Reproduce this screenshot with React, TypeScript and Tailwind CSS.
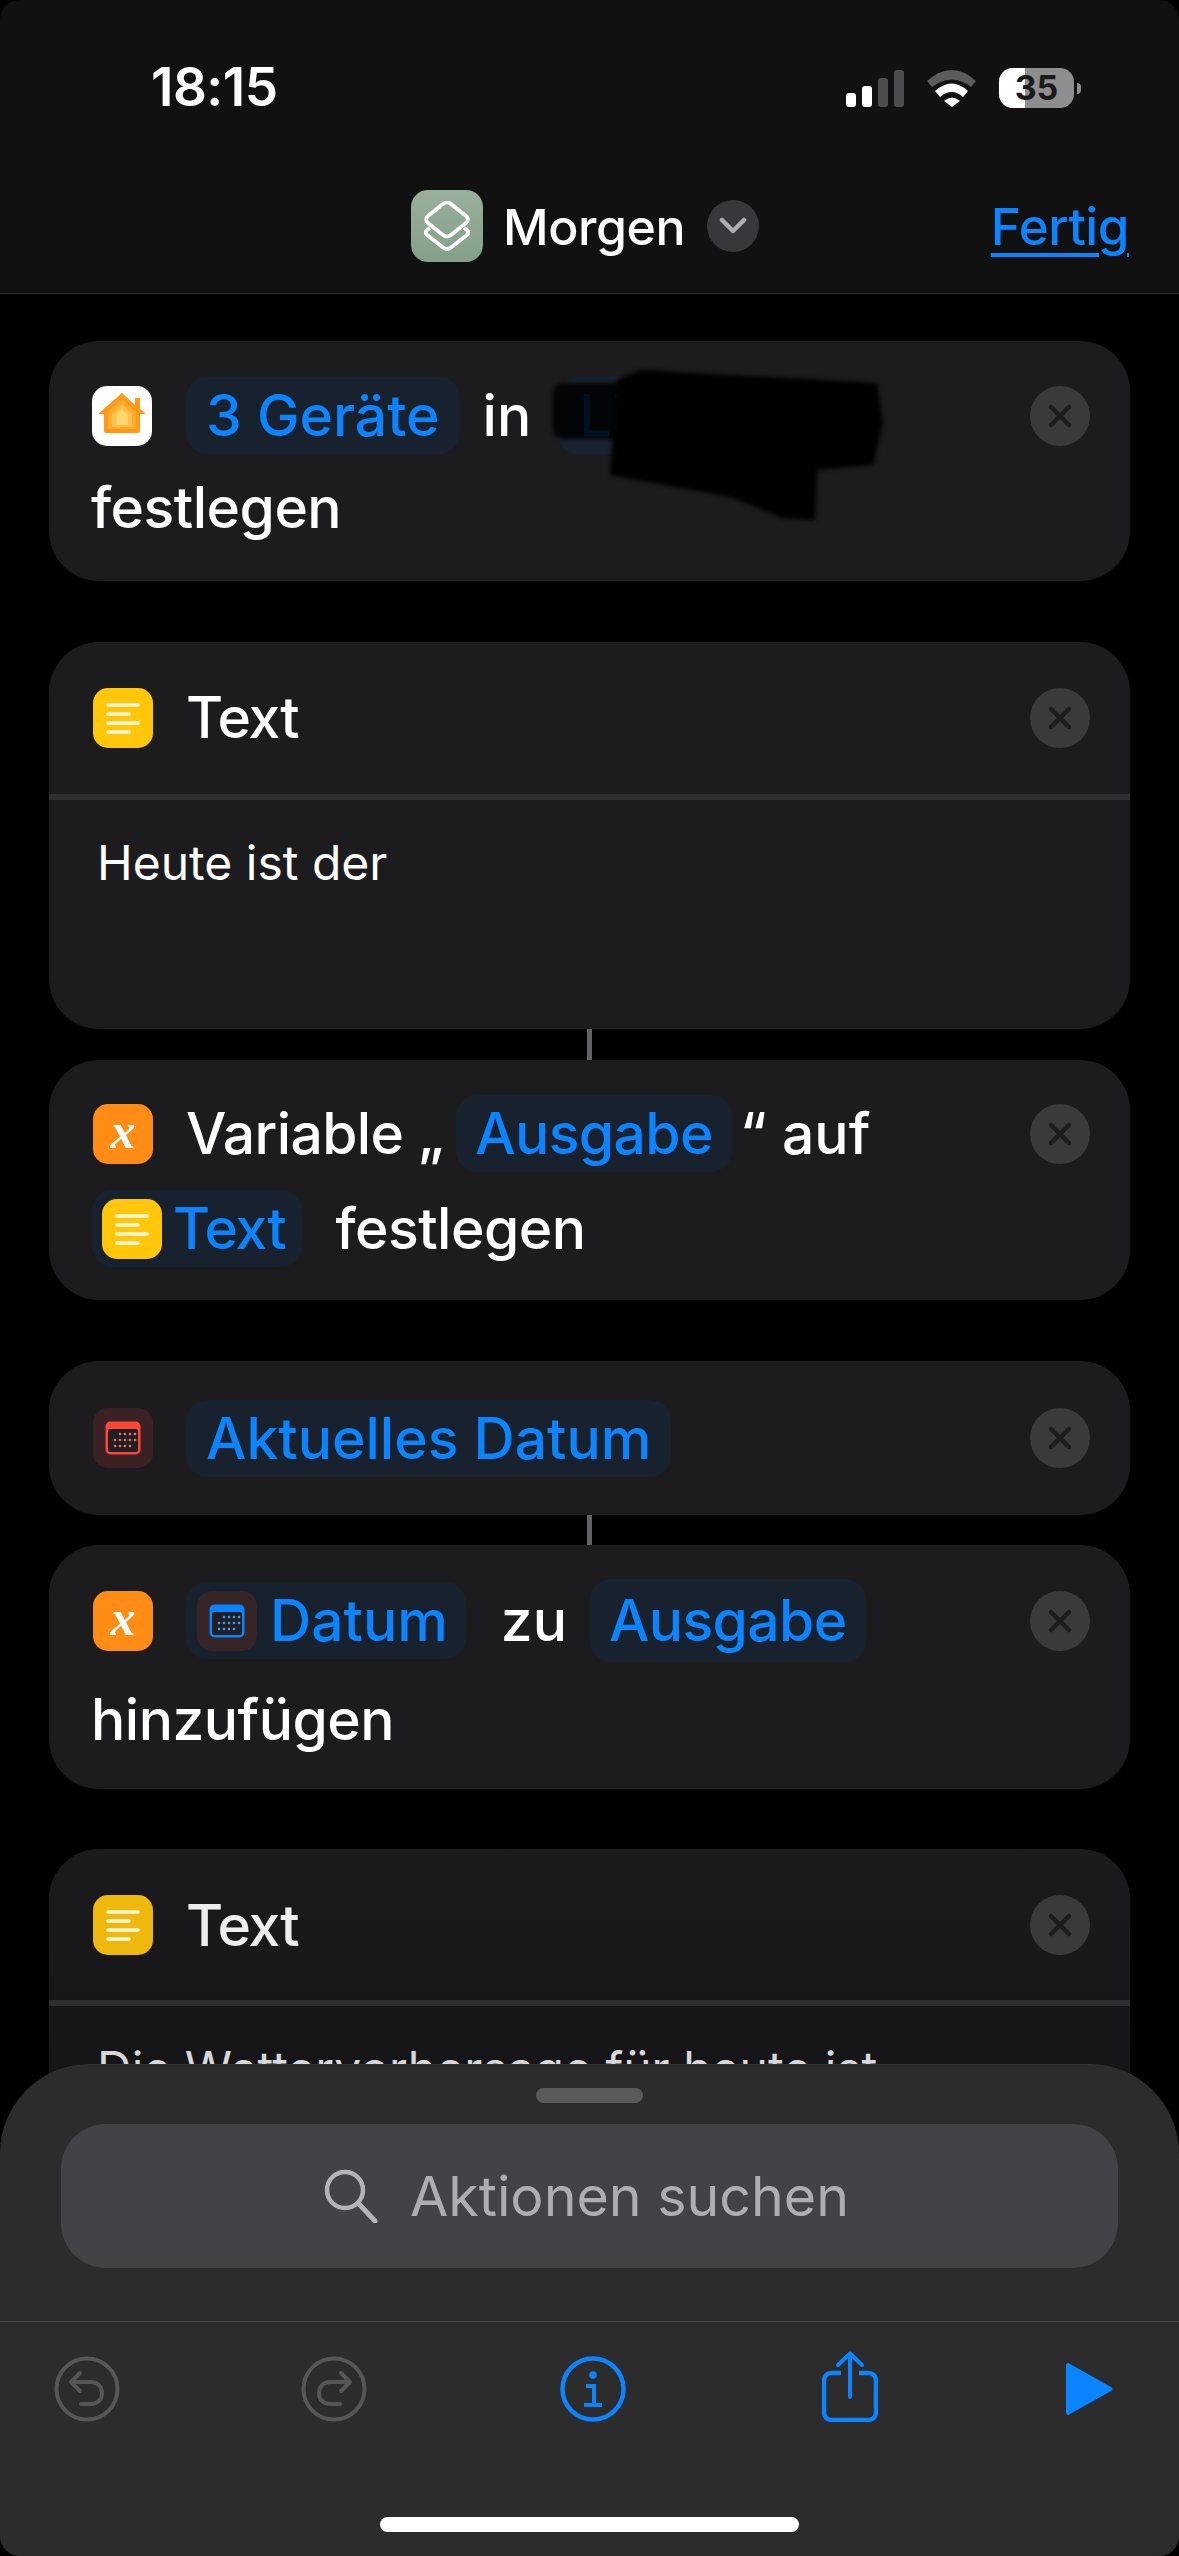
import React from 'react';

const FONT = 'font-["Inter","Liberation_Sans",sans-serif]';

const TextGlyph: React.FC = () => (
    <svg width="36" height="36" viewBox="0 0 36 36">
        <g stroke="#fff8dc" strokeWidth="3.6" strokeLinecap="round">
            <path d="M3 5h30" />
            <path d="M3 14h21" />
            <path d="M3 23h30" />
            <path d="M3 32h21" />
        </g>
    </svg>
);

const TextTile: React.FC<{ dim?: boolean }> = ({ dim }) => (
    <div className={`w-[60px] h-[60px] rounded-[15px] flex items-center justify-center shrink-0 ${dim ? 'bg-[#efb80c]' : 'bg-[#ffc60a]'}`}>
        <TextGlyph />
    </div>
);

const VarTile: React.FC = () => (
    <div className='w-[60px] h-[60px] rounded-[15px] bg-[#ff8c14] flex items-center justify-center shrink-0 pb-[6px]'>
        <span className='font-["Liberation_Serif",serif] italic font-bold text-white text-[50px] leading-none'>x</span>
    </div>
);

const CalendarTile: React.FC<{ color: string; dots: string; bg: string }> = ({ color, dots, bg }) => (
    <div className={`w-[60px] h-[60px] rounded-[15px] flex items-center justify-center shrink-0 ${bg}`}>
        <svg width="36" height="34" viewBox="0 0 36 34">
            <rect x="0.5" y="0.5" width="35" height="33" rx="5" fill={color} />
            <rect x="3" y="8" width="30" height="23" rx="2" fill="#1f1f24" />
            {[0, 1, 2, 3].map(col => (
                <circle key={`a${col}`} cx={15 + col * 5} cy="13" r="1.3" fill={dots} />
            ))}
            {[0, 1, 2, 3, 4].map(col => (
                <circle key={`b${col}`} cx={10 + col * 5} cy="19" r="1.3" fill={dots} />
            ))}
            {[0, 1, 2, 3].map(col => (
                <circle key={`c${col}`} cx={10 + col * 5} cy="25" r="1.3" fill={dots} />
            ))}
        </svg>
    </div>
);

const HomeTile: React.FC = () => (
    <div className='w-[60px] h-[60px] rounded-[15px] bg-white shrink-0 overflow-hidden'>
        <svg width="60" height="60" viewBox="0 0 60 60">
            <path d="M30 7 43 19V12H48V23L53 27V28H48V45Q48 47 46 47H14Q12 47 12 45V28H7V27Z" fill="#ff9a17" />
            <path d="M30 13 44 26V43H16V26Z" fill="#ffac2e" />
            <path d="M30 18 40 28V41H20V28Z" fill="#ffc04c" />
            <path d="M30 23 36 29V39H24V29Z" fill="#ffd570" />
        </svg>
    </div>
);

const CloseButton: React.FC = () => (
    <div className='w-[60px] h-[60px] rounded-full bg-[#3a3a3c] flex items-center justify-center shrink-0'>
        <svg width="26" height="26" viewBox="0 0 26 26">
            <path d="M4 4 22 22M22 4 4 22" stroke="#1c1c1e" strokeWidth="4.500" strokeLinecap="round" />
        </svg>
    </div>
);

const Pill: React.FC<{ children: React.ReactNode; className?: string }> = ({ children, className }) => (
    <div className={`h-[77px] rounded-[21px] bg-[#18222e] text-[#0a84ff] flex items-center ${className ?? 'px-[21px]'}`}>
        {children}
    </div>
);

const Connector: React.FC<{ height: string }> = ({ height }) => (
    <div className={`w-[5px] bg-[#636366] mx-auto ${height}`} />
);

const Card: React.FC<{ children: React.ReactNode; className?: string }> = ({ children, className }) => (
    <div className={`relative mx-[49px] rounded-[50px] bg-[#1c1c1e] ${className ?? ''}`}>{children}</div>
);

const App: React.FC = () => {
    return (
        <div className={`relative w-[1179px] h-[2556px] overflow-hidden bg-black text-white ${FONT}`}>
            {/* header */}
            <div className='h-[294px] bg-[#111112] border-b border-[#2c2c2e] rounded-t-[20px]'>
                <div className='flex items-center h-[176px] pl-[151px] pr-[98px]'>
                    <span className='text-[53px] font-semibold tracking-[-0.5px]'>18:15</span>
                    <div className='ml-auto flex items-center gap-[23px]'>
                        <svg width="58" height="37" viewBox="0 0 58 37">
                            <rect x="0" y="23" width="10" height="14" rx="3" fill="#fff" />
                            <rect x="16" y="16" width="10" height="21" rx="3" fill="#fff" />
                            <rect x="32" y="8" width="10" height="29" rx="3" fill="#4d4d4f" />
                            <rect x="48" y="0" width="10" height="37" rx="3" fill="#4d4d4f" />
                        </svg>
                        <svg width="49" height="37" viewBox="0 0 49 37">
                            <path d="M0 11Q25 -11 49 11L44 17Q25 2 5 17Z" fill="#5c5c5e" />
                            <path d="M8 21Q25 6 41 21L36 27Q25 17 13 27Z" fill="#fff" />
                            <path d="M17 31Q25 24 33 31L25 37Z" fill="#fff" />
                        </svg>
                        <div className='flex items-center gap-[3px]'>
                            <div className='relative w-[75px] h-[40px] rounded-[14px] overflow-hidden bg-[#8e8e8e] flex items-center justify-center'>
                                <div className='absolute left-0 top-0 bottom-0 w-[26px] bg-white' />
                                <span className='relative text-[#1a1a1a] text-[34px] font-bold leading-none'>35</span>
                            </div>
                            <div className='w-[4px] h-[11px] rounded-r-full bg-[#8e8e8e]' />
                        </div>
                    </div>
                </div>
                <div className='flex items-center h-[72px] mt-[14px] pl-[411px] pr-[50px]'>
                    <div className='w-[72px] h-[72px] rounded-[17px] bg-gradient-to-b from-[#98af9c] to-[#84a08a] flex items-center justify-center'>
                        <svg width="46" height="50" viewBox="0 0 46 50" fill="none">
                            <path d="M6 27 2.500 29.500C1.500 31 1.500 32 2.500 33.500L19 46.500C21.500 48.300 24.500 48.300 27 46.500L43.500 33.500C44.500 32 44.500 31 43.500 29.500L40 27" stroke="#fff" strokeWidth="3.800" strokeLinejoin="round" />
                            <path d="M19 3 4 15C1.500 17 1.500 20 4 22L19 34C21.500 36 24.500 36 27 34L42 22C44.500 20 44.500 17 42 15L27 3C24.500 1 21.500 1 19 3Z" stroke="#fff" strokeWidth="3.800" strokeLinejoin="round" />
                        </svg>
                    </div>
                    <span className='ml-[20px] mt-[2px] text-[50px] font-medium leading-none tracking-[-0.4px]'>Morgen</span>
                    <div className='ml-[22px] w-[52px] h-[52px] rounded-full bg-[#38383c] flex items-center justify-center'>
                        <svg width="28" height="18" viewBox="0 0 28 18">
                            <path d="M3 3 14 14 25 3" stroke="#aeaeb2" strokeWidth="4.500" strokeLinecap="round" strokeLinejoin="round" fill="none" />
                        </svg>
                    </div>
                    <span className='ml-auto text-[51px] font-medium leading-none tracking-[-0.4px] text-[#0a84ff] underline underline-offset-[8px] decoration-[4px]'>Fertig</span>
                </div>
            </div>

            {/* action list */}
            <Card className='mt-[47px] h-[240px] pt-[36px] pl-[43px] pr-[40px] text-[57px] font-medium leading-none'>
                <div className='flex items-center h-[77px]'>
                    <HomeTile />
                    <Pill className='ml-[34px] px-[20px]'>3 Geräte</Pill>
                    <span className='ml-[23px]'>in</span>
                    <Pill className='ml-[26px] w-[200px] pl-[22px]'>Li</Pill>
                    <div className='ml-auto'>
                        <CloseButton />
                    </div>
                </div>
                <div className='mt-[25px] -ml-[1px] tracking-[-0.5px]'>festlegen</div>
                {/* redaction scribble over the room name */}
                <svg className='absolute left-[490px] top-[15px] blur-[2px]' width="360" height="175" viewBox="0 0 360 175">
                    <rect x="14" y="27" width="72" height="56" rx="10" fill="#000" fillOpacity="0.88" />
                    <path d="M101 14 338 27 344 67 334 109 278 114 276 164 244 162 191 141 71 119 78 24Z" fill="#000" />
                </svg>
            </Card>

            <Card className='mt-[61px] h-[387px] rounded-[50px] text-[57px] font-medium leading-none'>
                <div className='flex items-center h-[150px] pl-[44px] pr-[40px] pt-[1px]'>
                    <TextTile />
                    <span className='ml-[33px] tracking-[-1.2px]'>Text</span>
                    <div className='ml-auto'>
                        <CloseButton />
                    </div>
                </div>
                <div className='h-[6px] bg-[#2e2e31] mt-[2px]' />
                <div className='pl-[48px] pt-[39px] text-[48px] font-normal leading-none'>Heute ist der</div>
            </Card>
            <Connector height='h-[31px]' />

            <Card className='h-[240px] pt-[35px] pl-[44px] pr-[40px] text-[57px] font-medium leading-none'>
                <div className='flex items-center h-[77px]'>
                    <VarTile />
                    <span className='ml-[33px] tracking-[-0.6px]'>Variable „</span>
                    <Pill className='ml-[13px] px-[19px] tracking-[-0.6px]'>Ausgabe</Pill>
                    <span className='ml-[8px]'>“ auf</span>
                    <div className='ml-auto'>
                        <CloseButton />
                    </div>
                </div>
                <div className='flex items-center h-[77px] mt-[18px] -ml-[1px]'>
                    <Pill className='pl-[10px] pr-[17px]'>
                        <TextTile />
                        <span className='ml-[11px] tracking-[-1.2px]'>Text</span>
                    </Pill>
                    <span className='ml-[33px] tracking-[-0.5px]'>festlegen</span>
                </div>
            </Card>

            <Card className='mt-[61px] h-[154px] pl-[44px] pr-[40px] flex items-center text-[57px] font-medium leading-none'>
                <CalendarTile color='#ff453a' dots='#ff6a60' bg='bg-[#3a2224]' />
                <Pill className='ml-[33px] px-[20px]'>Aktuelles Datum</Pill>
                <div className='ml-auto'>
                    <CloseButton />
                </div>
            </Card>
            <Connector height='h-[30px]' />

            <Card className='h-[244px] pt-[37px] pl-[44px] pr-[40px] text-[57px] font-medium leading-none'>
                <div className='flex items-center h-[77px]'>
                    <VarTile />
                    <Pill className='ml-[33px] pl-[11px] pr-[18px]'>
                        <CalendarTile color='#0a84ff' dots='#3f9cff' bg='bg-[#352527]' />
                        <span className='ml-[13px]'>Datum</span>
                    </Pill>
                    <span className='ml-[35px]'>zu</span>
                    <Pill className='ml-[23px] h-[83px] px-[19px] tracking-[-0.6px]'>Ausgabe</Pill>
                    <div className='ml-auto'>
                        <CloseButton />
                    </div>
                </div>
                <div className='mt-[32px] -ml-[2px] tracking-[-0.5px]'>hinzufügen</div>
            </Card>

            <Card className='mt-[60px] h-[400px] !bg-transparent bg-gradient-to-b from-[#1b1b1d] to-[#111114] text-[57px] font-medium leading-none text-[#eeeeee]'>
                <div className='flex items-center h-[150px] pl-[44px] pr-[40px] pt-[2px]'>
                    <TextTile dim />
                    <span className='ml-[33px] tracking-[-1.2px]'>Text</span>
                    <div className='ml-auto'>
                        <CloseButton />
                    </div>
                </div>
                <div className='h-[6px] bg-[#2e2e31] mt-[1px]' />
                <div className='pl-[48px] pt-[39px] text-[48px] font-normal leading-none text-[#d8d8da]'>Die Wettervorhersage für heute ist</div>
            </Card>

            {/* bottom sheet */}
            <div className='absolute left-0 right-0 bottom-0 h-[492px] rounded-t-[90px] rounded-b-[20px] bg-[#2c2c2d] border-t border-[#323234]'>
                <div className='w-[107px] h-[15px] rounded-full bg-[#5a5a5c] mx-auto mt-[23px]' />
                <div className='mx-[61px] mt-[21px] h-[144px] rounded-[45px] bg-[#434347] flex items-center justify-center'>
                    <svg width="54" height="54" viewBox="0 0 54 54" fill="none">
                        <circle cx="21" cy="21" r="18" stroke="#b4b4b8" strokeWidth="4.500" />
                        <path d="M34 34 51 52" stroke="#b4b4b8" strokeWidth="5" strokeLinecap="round" />
                    </svg>
                    <span className='ml-[32px] mr-[6px] text-[55.5px] leading-none text-[#aeaeb2]'>Aktionen suchen</span>
                </div>
                <div className='mt-[53px] border-t border-[#48484a] h-[130px] relative flex items-center'>
                    <div className='flex items-center w-full pl-[54px] pr-[66px] pt-[4px]'>
                        <svg width="66" height="66" viewBox="0 0 66 66" fill="none" stroke="#565658" strokeWidth="4">
                            <circle cx="33" cy="33" r="30.500" />
                            <path d="M26 17 17 26 26 35M18 26H37C44 26 48 31 48 37C48 44 43 48 37 48H27" strokeLinecap="round" strokeLinejoin="round" />
                        </svg>
                        <svg className='ml-[181px]' width="66" height="66" viewBox="0 0 66 66" fill="none" stroke="#565658" strokeWidth="4">
                            <circle cx="33" cy="33" r="30.500" />
                            <path d="M40 17 49 26 40 35M48 26H29C22 26 18 31 18 37C18 44 23 48 29 48H39" strokeLinecap="round" strokeLinejoin="round" />
                        </svg>
                        <svg className='ml-[193px]' width="66" height="66" viewBox="0 0 66 66" fill="none" stroke="#0a84ff" strokeWidth="4.500">
                            <circle cx="33" cy="33" r="30.500" />
                            <circle cx="33" cy="19" r="3.800" fill="#0a84ff" stroke="none" />
                            <path d="M26 30H34V49M24 49H42" strokeWidth="4" />
                        </svg>
                        <svg className='ml-[196px] -mt-[4px]' width="56" height="71" viewBox="0 0 56 71" fill="none" stroke="#0a84ff" strokeWidth="4.500">
                            <path d="M19 22H10C5 22 2 25 2 30V61C2 66 5 69 10 69H46C51 69 54 66 54 61V30C54 25 51 22 46 22H37" />
                            <path d="M28 46V3M16 14 28 2.500 40 14" strokeWidth="4" strokeLinecap="round" strokeLinejoin="round" />
                        </svg>
                        <svg className='ml-auto' width="48" height="54" viewBox="0 0 48 54">
                            <path d="M1 4C1 1 3 0 5 2L46 25C48 26 48 28 46 29L5 52C3 54 1 53 1 50Z" fill="#0a84ff" />
                        </svg>
                    </div>
                </div>
            </div>

            {/* home indicator */}
            <div className='absolute left-[380px] bottom-[24px] w-[419px] h-[15px] rounded-full bg-white' />
        </div>
    );
};

export default App;
